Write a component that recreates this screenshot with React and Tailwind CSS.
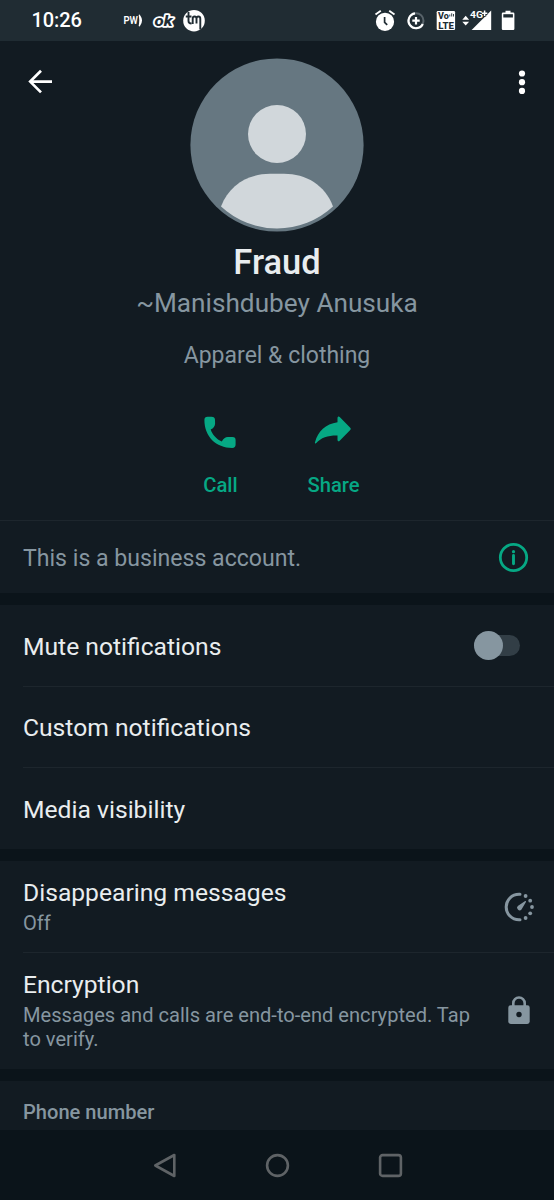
import React from "react";

function StatusBar() {
  return (
    <div className="flex h-[41px] shrink-0 items-center bg-[#202c33] pl-[31.500px] text-white">
      <span className="w-[91.500px] text-[20px] leading-[41px] font-medium tracking-[-0.1px]">10:26</span>
      <svg width="21" height="41" viewBox="0 0 21 41">
        <text x="0.500" y="24.400" fontSize="10.500" fontWeight="600" fill="#fff" textLength="14.500" lengthAdjust="spacingAndGlyphs">PW</text>
        <path d="M16.400 15.300Q20.200 20.500 16.400 25.700Q17.600 20.500 16.400 15.300z" fill="#fff" stroke="#fff" strokeWidth="1.400" strokeLinejoin="round" />
      </svg>
      <svg className="ml-[8px]" width="24" height="41" viewBox="0 0 24 41">
        <text x="2.500" y="25.700" fontSize="15.500" fontWeight="800" fontStyle="italic" fill="#202c33" stroke="#fff" strokeWidth="3.600" paintOrder="stroke" strokeLinejoin="round" textLength="18" lengthAdjust="spacingAndGlyphs">ok</text>
      </svg>
      <svg className="ml-[7px]" width="22" height="41" viewBox="0 0 22 41">
        <circle cx="11" cy="20.700" r="10.800" fill="#fff" />
        <path d="M5.500 12v9q0 2.500 3 2.500M2.800 16.500h5.700M9.700 24v-5.300q0-2.200 1.900-2.200t1.900 2.200V23.500M13.500 18.700q0-2.200 1.900-2.200t1.900 2.200V29.500" fill="none" stroke="#202c33" strokeWidth="1.900" />
      </svg>
      <div className="ml-auto flex items-center pr-[38px]">
        <svg width="22" height="41" viewBox="0 0 22 41">
          <circle cx="11" cy="21.800" r="9.100" fill="#fff" />
          <path d="M1.500 14.500L6.800 10.800M15.200 10.800L20.500 14.500" stroke="#fff" strokeWidth="1.900" />
          <path d="M10.600 17v5.300l2.600 2.600" fill="none" stroke="#202c33" strokeWidth="1.700" />
        </svg>
        <svg className="ml-[10px]" width="20" height="41" viewBox="0 0 20 41">
          <circle cx="10" cy="20.700" r="7.500" fill="none" stroke="#58636a" strokeWidth="2" />
          <path d="M9 13.300A7.500 7.500 0 1 0 16.800 24" fill="none" stroke="#fff" strokeWidth="2.200" />
          <path d="M10 17v7.400M6.300 20.700h7.400" stroke="#fff" strokeWidth="2.200" />
        </svg>
        <svg className="ml-[10px]" width="20" height="41" viewBox="0 0 20 41">
          <rect x="0.700" y="11" width="18.400" height="19" rx="1.200" fill="#fff" />
          <text x="2" y="19.200" fontSize="8.500" fontWeight="800" fill="#202c33" textLength="10.800" lengthAdjust="spacingAndGlyphs">Vo</text>
          <path d="M13.800 16.500v-2M15.700 16.500v-3.200M17.500 16.500v-2.500" stroke="#202c33" strokeWidth="0.900" />
          <text x="2.200" y="28.700" fontSize="9.500" fontWeight="800" fill="#202c33" textLength="15.600" lengthAdjust="spacingAndGlyphs">LTE</text>
        </svg>
        <svg className="ml-[6px]" width="30" height="41" viewBox="0 0 30 41">
          <path d="M0.300 19.700L3.700 15.800L7.100 19.700zM0.300 21.700L3.700 25.600L7.100 21.700z" fill="#fff" />
          <path d="M29.200 10.500V30H9.600z" fill="#fff" />
          <text x="8" y="18" fontSize="9.800" fontWeight="700" fill="#fff" stroke="#202c33" strokeWidth="1.600" paintOrder="stroke" textLength="13" lengthAdjust="spacingAndGlyphs">4G</text>
          <path d="M22.600 10v6.400M19.800 13.200h5.600" stroke="#202c33" strokeWidth="3.200" />
          <path d="M22.600 10.500v5.400M19.900 13.200h5.400" stroke="#fff" strokeWidth="1.500" />
        </svg>
        <svg className="ml-[9px]" width="15" height="41" viewBox="0 0 15 41">
          <path d="M4.500 10.800h5v1.800h2.700q1.200 0 1.200 1.200v15q0 1.200-1.200 1.200H2q-1.200 0-1.200-1.200v-15q0-1.200 1.200-1.200h2.500z" fill="#fff" />
          <rect x="2.300" y="14.200" width="9.600" height="3.300" fill="#202c33" />
        </svg>
      </div>
    </div>
  );
}

function Action({ label, children }) {
  return (
    <button className="flex w-[113px] flex-col items-center text-[#06a884]">
      {children}
      <span className="mt-[19px] text-[20.200px] leading-[24px] font-medium">{label}</span>
    </button>
  );
}

function Profile() {
  return (
    <header className="relative flex h-[480px] shrink-0 flex-col items-center border-b border-[#1d262d] pt-[17px]">
      <button className="absolute top-[28px] left-[28px]" aria-label="Back">
        <svg width="25" height="25" viewBox="0 0 25 25" fill="none" stroke="#fff" strokeWidth="2.700">
          <path d="M24 12.600H2.500M13 1.800L2.200 12.600L13 23.400" />
        </svg>
      </button>
      <button className="absolute top-[28px] right-[27px]" aria-label="More options">
        <svg width="10" height="26" viewBox="0 0 10 26" fill="#fff">
          <circle cx="5" cy="4.500" r="3.100" />
          <circle cx="5" cy="13.200" r="3.100" />
          <circle cx="5" cy="21.900" r="3.100" />
        </svg>
      </button>
      <svg width="174" height="174" viewBox="0 0 174 174">
        <circle cx="87" cy="87" r="86.600" fill="#667781" />
        <circle cx="87" cy="76" r="29" fill="#d1d7db" />
        <path d="M31 148.500C39 127 58 115.800 80 115.800H94C116 115.800 135 127 143 148.500A82.500 82.500 0 0 1 31 148.500z" fill="#d1d7db" />
      </svg>
      <h1 className="mt-[9px] text-[34.500px] leading-[42px] font-medium text-[#e9edef]">Fraud</h1>
      <p className="mt-[3px] text-[26.200px] leading-[34px] text-[#8696a0]">~Manishdubey Anusuka</p>
      <p className="mt-[21px] text-[23px] leading-[30px] text-[#8696a0]">Apparel &amp; clothing</p>
      <div className="mt-[41px] flex">
        <Action label="Call">
          <svg className="-ml-px" width="42" height="42" viewBox="0 0 42 42" fill="currentColor">
            <path d="M5.400 8C5.400 5.700 6.600 4.800 8.500 4.800H12.500C14.800 4.800 15.900 5.800 16 7.800L16.100 11.500C16.100 14 14.500 16.200 11.700 17.600C13.400 22.800 17.500 27.300 22.800 29.600C24.400 26.600 26.300 25 28.800 25H33.500C35.700 25 36.600 26.200 36.600 28.200V32.500C36.600 34.800 35.500 35.900 33.200 35.900C17 35.900 5.400 24.500 5.400 8z" />
          </svg>
        </Action>
        <Action label="Share">
          <svg className="-ml-px" width="42" height="42" viewBox="0 0 42 42" fill="currentColor">
            <path d="M25.500 6c0-1.500 1.200-2 2.200-1L38 15.500c1 1 1 1.700 0 2.700L27.700 28.700c-1 1-2.200.5-2.200-1V23.500C16.500 23.300 9 25.500 4.300 31.100c-.8.900-1.700.3-1.300-.8C6 19 13.500 12 25.500 10.200z" />
          </svg>
        </Action>
      </div>
    </header>
  );
}

function Row({ title, sub, height, divider, icon }) {
  return (
    <div className={`ml-[23px] flex shrink-0 items-center ${height} ${divider ? "border-b border-[#1d262d]" : ""}`}>
      <div className="flex-1">
        <div className={`text-[24.650px] ${sub ? "-mt-[2px] pb-[3px] leading-[31px]" : "pt-[2px] leading-[32px]"} text-[#e9edef]`}>{title}</div>
        {sub && <div className="w-[462px] text-[20.100px] leading-[24px] text-[#8696a0]">{sub}</div>}
      </div>
      {icon}
    </div>
  );
}

const Gap = () => <div className="h-[12px] shrink-0 bg-[#0b141a]" />;

function Toggle() {
  return (
    <div className="mr-[34px] flex h-[21px] w-[46px] items-center rounded-full bg-[#323e46]">
      <span className="size-[29px] shrink-0 rounded-full bg-[#8696a0]" />
    </div>
  );
}

export default function App() {
  return (
    <main className="flex h-[1200px] w-[554px] flex-col overflow-hidden bg-[#121b22] font-[Roboto,sans-serif]">
      <StatusBar />
      <Profile />
      <div className="flex h-[72px] shrink-0 items-center justify-between pr-[25px] pl-[23px]">
        <span className="pt-[3px] text-[23.100px] leading-[32px] text-[#8696a0]">This is a business account.</span>
        <svg width="31" height="31" viewBox="0 0 31 31">
          <circle cx="15.500" cy="15.500" r="13.200" fill="none" stroke="#06a884" strokeWidth="2.800" />
          <path d="M15.500 13.500v8.300" stroke="#06a884" strokeWidth="2.900" strokeLinecap="round" />
          <circle cx="15.500" cy="9.700" r="1.600" fill="#06a884" />
        </svg>
      </div>
      <Gap />
      <Row title="Mute notifications" height="h-[82px]" divider icon={<Toggle />} />
      <Row title="Custom notifications" height="h-[81px]" divider />
      <Row title="Media visibility" height="h-[81px]" />
      <Gap />
      <Row
        title="Disappearing messages"
        sub="Off"
        height="h-[92px]"
        divider
        icon={
          <svg className="mr-[19px]" width="32" height="32" viewBox="0 0 32 32" fill="#8696a0">
            <path d="M17 3.200H16A12.800 12.800 0 0 0 16 28.800H17" fill="none" stroke="#8696a0" strokeWidth="3" strokeLinecap="round" />
            <path d="M14.800 15L21.800 10.200c.8-.5 1.500.2 1 1L18.500 18.500a2.500 2.500 0 1 1-3.700-3.500z" />
            <circle cx="22.600" cy="5" r="1.900" />
            <circle cx="27.200" cy="9.700" r="1.900" />
            <circle cx="29" cy="16" r="1.900" />
            <circle cx="27.200" cy="22.300" r="1.900" />
            <circle cx="22.600" cy="27" r="1.900" />
          </svg>
        }
      />
      <Row
        title="Encryption"
        sub="Messages and calls are end-to-end encrypted. Tap to verify."
        height="h-[116px]"
        icon={
          <svg className="mr-[24px]" width="22" height="30" viewBox="0 0 22 30">
            <path d="M5.300 11V7.200a5.700 5.700 0 0 1 11.400 0V11" fill="none" stroke="#8696a0" strokeWidth="2.600" />
            <rect x="0.300" y="9.300" width="21.400" height="18.600" rx="2.400" fill="#8696a0" />
            <circle cx="11" cy="18.500" r="2.700" fill="#121b22" />
          </svg>
        }
      />
      <Gap />
      <div className="flex h-[49px] shrink-0 items-end pb-[5px] pl-[23px] text-[20.100px] leading-[26px] font-medium text-[#8696a0]">Phone number</div>
      <nav className="flex h-[70px] shrink-0 items-center justify-center gap-[86px] bg-[#0b141a]">
        <svg width="27" height="27" viewBox="0 0 27 27" fill="none" stroke="#5f6366" strokeWidth="2.600" strokeLinejoin="round">
          <path d="M23.300 3V24L4.300 13.500z" />
        </svg>
        <svg width="27" height="27" viewBox="0 0 27 27" fill="none" stroke="#5f6366" strokeWidth="2.600">
          <circle cx="13.500" cy="13.500" r="10.400" />
        </svg>
        <svg width="27" height="27" viewBox="0 0 27 27" fill="none" stroke="#5f6366" strokeWidth="2.600">
          <rect x="3.100" y="3.100" width="20.800" height="20.800" rx="2.500" />
        </svg>
      </nav>
    </main>
  );
}
